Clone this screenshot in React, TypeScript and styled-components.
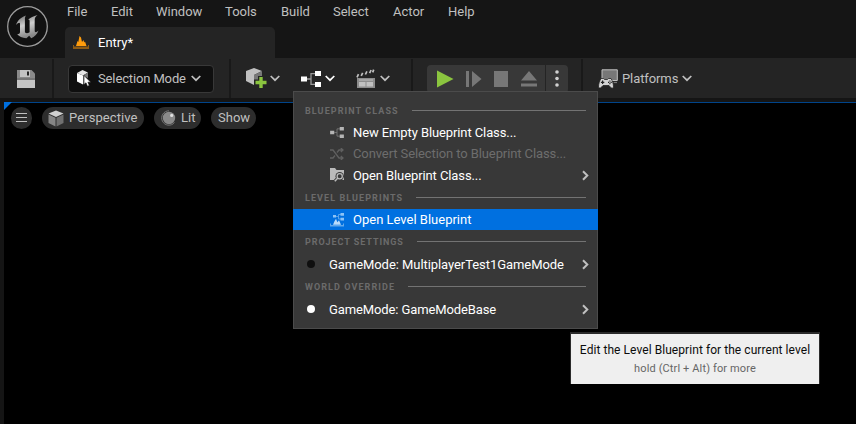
import React from "react";
import styled, { createGlobalStyle } from "styled-components";

const GlobalStyle = createGlobalStyle`
  * { box-sizing: border-box; }
  body { margin: 0; background: #000; font-family: Roboto, "Liberation Sans", sans-serif; overflow: hidden; }
  svg { display: block; flex: none; }
`;

const Window = styled.div`
  position: relative;
  width: 856px;
  height: 424px;
  display: flex;
  flex-direction: column;
  background: #151515;
  color: #c0c0c0;
  font-size: 13px;
  line-height: 16px;
  white-space: nowrap;
`;
const TitleArea = styled.header`
  display: flex;
  height: 58px;
`;
const LogoBox = styled.div`
  width: 65px;
  padding: 5px 0 0 6px;
`;
const TitleColumn = styled.div`
  display: flex;
  flex-direction: column;
`;
const MenuBar = styled.nav`
  display: flex;
  height: 27px;
  padding: 4px 0 0 2px;
`;
const MenuBarItem = styled.span<{ $w: number }>`
  width: ${(p) => p.$w}px;
`;
const Tab = styled.div`
  display: flex;
  align-items: center;
  gap: 9px;
  width: 210px;
  height: 31px;
  padding-left: 8px;
  border-radius: 5px 5px 0 0;
  background: #242424;
  color: #fff;
`;
const Toolbar = styled.div`
  display: flex;
  height: 40px;
  background: #242424;
`;
const Group = styled.div<{ $w?: number; $pad?: number; $last?: boolean }>`
  display: flex;
  align-items: center;
  width: ${(p) => (p.$w ? p.$w + "px" : "auto")};
  height: 39px;
  margin-top: 1px;
  padding-left: ${(p) => p.$pad ?? 0}px;
  border-right: ${(p) => (p.$last ? "none" : "2px solid #191919")};
`;
const ModeButton = styled.div`
  display: flex;
  align-items: center;
  gap: 6px;
  width: 146px;
  height: 28px;
  padding: 0 12px 0 7px;
  border: 1px solid #383838;
  border-radius: 4px;
  background: #0f0f0f;
`;
const Label = styled.span<{ $w?: number; $ls?: number; $drop?: number }>`
  width: ${(p) => (p.$w ? p.$w + "px" : "auto")};
  padding-top: ${(p) => p.$drop ?? 0}px;
  letter-spacing: ${(p) => p.$ls ?? 0}px;
`;
const IconButton = styled.div<{ $w: number; $gap: number }>`
  display: flex;
  align-items: center;
  gap: ${(p) => p.$gap}px;
  width: ${(p) => p.$w}px;
`;
const PlayBar = styled.div`
  display: flex;
  height: 28px;
  border-radius: 4px;
  background: #383838;
  overflow: hidden;
`;
const PlayCell = styled.div<{ $w: number; $pad: number; $line?: boolean }>`
  display: flex;
  align-items: center;
  width: ${(p) => p.$w}px;
  padding-left: ${(p) => p.$pad}px;
  border-left: ${(p) => (p.$line ? "1px solid #242424" : "none")};
`;
const Viewport = styled.main`
  position: relative;
  flex: 1;
  margin: 4px 0 0 4px;
  background: #000;
  border-top: 1px solid #00448a;
`;
const Corner = styled.svg`
  position: absolute;
  left: 0;
  top: -1px;
`;
const ViewBar = styled.div`
  display: flex;
  padding: 4px 0 0 7px;
`;
const Pill = styled.div<{ $w: number; $pad: number; $gap?: number }>`
  display: flex;
  align-items: center;
  gap: ${(p) => p.$gap ?? 0}px;
  width: ${(p) => p.$w}px;
  height: 22px;
  margin-right: 10px;
  padding-left: ${(p) => p.$pad}px;
  border-radius: 11px;
  background: #2d2d2d;
`;
const Popup = styled.div`
  position: absolute;
  left: 293px;
  top: 91px;
  width: 305px;
  height: 238px;
  padding-top: 8px;
  border: 1px solid #4b4b4b;
  background: #383838;
  color: #fff;
`;
const Section = styled.div<{ $h: number; $ls?: number; $drop?: number }>`
  display: flex;
  align-items: center;
  gap: 13px;
  height: ${(p) => p.$h}px;
  padding: ${(p) => p.$drop ?? 0}px 11px 0;
  color: #6b6b6b;
  font-size: 9px;
  font-weight: 700;
  letter-spacing: ${(p) => p.$ls ?? 1.08}px;
  &::after {
    content: "";
    flex: 1;
    height: 1px;
    background: #737373;
  }
`;
const Item = styled.div<{ $h: number; $active?: boolean; $off?: boolean; $mode?: boolean }>`
  display: flex;
  align-items: center;
  height: ${(p) => p.$h}px;
  margin: 0 -1px;
  padding: 0 9px 0 ${(p) => (p.$mode ? 14 : 37)}px;
  background: ${(p) => (p.$active ? "#0070e0" : "transparent")};
  color: ${(p) => (p.$off ? "#6d6d6d" : "#fff")};
`;
const ItemIcon = styled.span`
  width: 23px;
`;
const Dot = styled.span<{ $on?: boolean }>`
  width: 8px;
  height: 8px;
  margin-right: 14px;
  border-radius: 50%;
  background: ${(p) => (p.$on ? "#fff" : "#0f0f0f")};
`;
const Fill = styled.span`
  flex: 1;
`;
const Tooltip = styled.div`
  position: absolute;
  left: 571px;
  top: 334px;
  width: 248px;
  height: 50px;
  padding-top: 8px;
  background: #efefef;
  box-shadow: 0 -1px 0 1px #2a2a2a;
  color: #0c0c0c;
  text-align: center;
  font-size: 12px;
  letter-spacing: 0.06px;
`;
const Hint = styled.div`
  margin-top: 3px;
  color: #666;
  font-size: 11px;
  line-height: 15px;
  letter-spacing: 0.13px;
`;

const Chevron = ({ color = "#c0c0c0" }: { color?: string }) => (
  <svg width="10" height="7" viewBox="0 0 10 7" fill="none" stroke={color} strokeWidth="1.7">
    <path d="M.7 1 5 5.2 9.3 1" />
  </svg>
);
const SubArrow = () => (
  <svg width="7" height="11" viewBox="0 0 7 11" fill="none" stroke="#c0c0c0" strokeWidth="2">
    <path d="M1 1.2 5.3 5.5 1 9.8" />
  </svg>
);
const Logo = () => (
  <svg width="43" height="43" viewBox="0 0 43 43">
    <defs>
      <linearGradient id="steel" x1="0" y1="0" x2=".3" y2="1">
        <stop offset="0" stopColor="#666" />
        <stop offset=".5" stopColor="#cfcfcf" />
        <stop offset="1" stopColor="#888" />
      </linearGradient>
    </defs>
    <circle cx="21.500" cy="21.500" r="19.800" fill="#111" stroke="#9c9c9c" strokeWidth="1.300" />
    <path
      fill="url(#steel)"
      d="M10 20C11.500 15.500 14.500 12.500 20 10.500 19 12 18.900 12.800 18.900 14.500V26.500C18.900 28.200 21 29 23.600 27.200V16C23.600 14.900 23 14.500 22.100 14.800 24.300 12.300 27.500 11.200 31.500 10 29.500 11.800 28.700 12.800 28.700 15V25.500C28.700 27.500 30 28 32.500 25.500 31 29.500 28.500 31.500 25.200 33.300L23.200 30.800 20.400 33.300C16 33.200 13.200 31.200 11.200 29.300 12.900 29.200 14 28.600 14 27V18.800C14 17.200 12.200 17.500 10 20Z"
    />
  </svg>
);
const LevelIcon = () => (
  <svg width="16" height="14" viewBox="0 0 16 14">
    <path fill="#ff9c0c" d="M3 10 4.500 5 5.300 6 6.500 0 8 1.500 9 6 10.500 4 11.200 6.500 12 5.500 13.500 10Z" />
    <path fill="#8d5b14" d="M0 9h1v1.500h14V9h1v4H0Z" />
  </svg>
);
const SaveIcon = () => (
  <svg width="18" height="18" viewBox="0 0 18 18">
    <path fill="#8a8a8a" d="M0 0H14.500L18 3.500V18H0Z" />
    <path fill="#c4c4c4" d="M3 0H13V7H3ZM0 10H18V18H0Z" />
    <path fill="#242424" d="M10 1.500h2V5.500h-2Z" />
    <path fill="#777" d="M0 8h18v2H0Z" />
  </svg>
);
const SelectIcon = () => (
  <svg width="16" height="17" viewBox="0 0 16 17">
    <path fill="#fff" d="M1 3 7 5.500V14.500L1 11.500Z" />
    <path fill="#e6e6e6" d="M1 3 6.500 0 12 2.500 7 5.500Z" />
    <path fill="#777" d="M7 5.500 12 2.500V8L8 6.500V14L7 14.500Z" />
    <path fill="#fff" stroke="#0f0f0f" strokeWidth=".6" d="M8 5.500V14.500L10 12.800 11.400 16.200 13.300 15.400 11.900 12.200H14.800Z" />
  </svg>
);
const AddIcon = () => (
  <svg width="21" height="21" viewBox="0 0 21 21">
    <path fill="#c0c0c0" d="M0 3 8 0 16 3 8 7V17L0 13Z" />
    <path fill="#777" d="M8 7 16 3V13L8 17Z" />
    <path stroke="#242424" strokeWidth="6" d="M15 8V21M8 14.500H21" />
    <path stroke="#8bc53f" strokeWidth="3.400" d="M15 9V20M9.500 14.500H20.500" />
  </svg>
);
const GraphIcon = ({ w = 20, h = 16, node = "#fff", wire = "#999" }) => (
  <svg width={w} height={h} viewBox="0 0 20 16">
    <path fill="none" stroke={wire} strokeWidth="1.300" d="M6 8H10M15 2.700H10V13.300H15" />
    <path fill={node} d="M0 5.500h6v5H0ZM14 0h6v5h-6ZM14 11h6v5h-6Z" />
  </svg>
);
const ClapIcon = () => (
  <svg width="19" height="20" viewBox="0 0 19 20">
    <path stroke="#c0c0c0" strokeWidth="1.700" d="M1 8.300 2.500 5.200M5.200 6.900 6.700 3.800M9.400 5.500 10.900 2.400M13.600 4.100 15.100 1M16.700 3.400 17.700 .6" />
    <path fill="#8c8c8c" d="M1 9H19V19H1Z" />
    <path fill="#c0c0c0" d="M3 13H9.500V17.500H3ZM10.500 13H17V17.500H10.500ZM3 10.500H17V11.500H3Z" />
  </svg>
);
const PlatformIcon = () => (
  <svg width="20" height="20" viewBox="0 0 20 20">
    <path fill="#777" stroke="#c0c0c0" d="M4 .8H19.300V11.500H4Z" />
    <path stroke="#777" strokeWidth="1.200" d="M15.500 13.500H19" />
    <path fill="#d4d4d4" stroke="#242424" strokeWidth=".8" d="M3 9.500H5.500L6.500 10.500H9.500L10.500 9.500H13C14.500 12 15.500 15 15.500 18 14.500 20 13.500 19.500 11 16.500H5C3 19 1.500 20 .5 18 .5 15 1.500 12 3 9.500Z" />
    <path stroke="#242424" strokeWidth="1.200" d="M2.900 13.300H6.300M4.600 11.600V15M10 13.300h1.300M12.500 13.300H13.800M11.900 11.400V12.600M11.900 14V15.200" />
  </svg>
);
const CubeIcon = () => (
  <svg width="16" height="17" viewBox="0 0 16 17">
    <path fill="#d0d0d0" d="M.5 3.500 8 .5 15.500 3.500 8 7Z" />
    <path fill="#858585" d="M.5 4.500 7.500 7.700V16.500L.5 13Z" />
    <path fill="#707070" d="M8.500 7.700 15.500 4.500V13L8.500 16.500Z" />
  </svg>
);
const LitIcon = () => (
  <svg width="16" height="16" viewBox="0 0 16 16">
    <circle cx="8" cy="8" r="6.200" fill="#8a8a8a" />
    <path d="M8 .8A7.200 7.200 0 1 0 13.500 12.500" fill="none" stroke="#777" />
    <circle cx="10.700" cy="5.400" r="1.600" fill="#e0e0e0" />
  </svg>
);
const ShuffleIcon = () => (
  <svg width="14" height="12" viewBox="0 0 14 12" fill="none" stroke="#606060" strokeWidth="1.300">
    <path d="M0 2H3L9 10H13M0 10H3L5 7.500M7 4.500 9 2H13M10.800 0 13 2 10.800 4M10.800 8 13 10 10.800 12" />
  </svg>
);
const FolderIcon = () => (
  <svg width="15" height="14" viewBox="0 0 15 14">
    <path fill="#bababa" d="M0 0H5L6.500 2H14V12H0Z" />
    <circle cx="9.700" cy="8.200" r="4.200" fill="#383838" />
    <path stroke="#383838" strokeWidth="3.500" d="M9 9 4 14.500" />
    <circle cx="9.700" cy="8.200" r="2.600" fill="none" stroke="#bababa" strokeWidth="1.300" />
    <path stroke="#bababa" strokeWidth="1.500" d="M7.900 10 4.800 13.300" />
  </svg>
);
const LevelGraphIcon = () => (
  <svg width="14" height="14" viewBox="0 0 14 14">
    <path fill="none" stroke="#5aa3ea" d="M5 3.500H8.500M11 1.500H8.500V6H11" />
    <path fill="#8cc2f5" d="M3 2H6V4.500H3ZM10.500 0H14V2.800H10.500ZM10.500 4.800H14V7.500H10.500Z" />
    <path fill="#b9dcfb" d="M3 11.800 4.500 8.200 6 5.800 7.300 9.300 9 7.300 11 11.800Z" />
    <path fill="#61a8eb" d="M0 10.500h1v1.500h12V10.500h1v3H0Z" />
  </svg>
);

const menus: [string, number][] = [
  ["File", 44], ["Edit", 45], ["Window", 69], ["Tools", 56],
  ["Build", 52], ["Select", 60], ["Actor", 55], ["Help", 40],
];

export default function App() {
  return (
    <Window>
      <GlobalStyle />
      <TitleArea>
        <LogoBox><Logo /></LogoBox>
        <TitleColumn>
          <MenuBar>
            {menus.map(([name, w]) => <MenuBarItem key={name} $w={w}>{name}</MenuBarItem>)}
          </MenuBar>
          <Tab><LevelIcon /><Label>Entry*</Label></Tab>
        </TitleColumn>
      </TitleArea>
      <Toolbar>
        <Group $w={54} $pad={17}><SaveIcon /></Group>
        <Group $w={177} $pad={14}>
          <ModeButton>
            <SelectIcon />
            <Label $w={87} $ls={-0.13}>Selection Mode</Label>
            <Chevron />
          </ModeButton>
        </Group>
        <Group $w={182} $pad={15}>
          <IconButton $w={55} $gap={3}><AddIcon /><Chevron /></IconButton>
          <IconButton $w={55} $gap={4}><GraphIcon /><Chevron color="#fff" /></IconButton>
          <IconButton $w={40} $gap={5}><ClapIcon /><Chevron /></IconButton>
        </Group>
        <Group $w={170} $pad={14}>
          <PlayBar>
            <PlayCell $w={38} $pad={10}>
              <svg width="17" height="18"><path fill="#8bc53f" d="M0 .5 16.500 9 0 17.500Z" /></svg>
            </PlayCell>
            <PlayCell $w={29} $pad={1}>
              <svg width="16" height="16"><path fill="#777" d="M0 0h3v16H0ZM6 0 15.500 8 6 16Z" /></svg>
            </PlayCell>
            <PlayCell $w={27} $pad={0}>
              <svg width="14" height="16"><path fill="#777" d="M0 0h14v16H0Z" /></svg>
            </PlayCell>
            <PlayCell $w={24} $pad={0}>
              <svg width="16" height="16"><path fill="#777" d="M8 0 16 9.500H0ZM0 12.500h16v3H0Z" /></svg>
            </PlayCell>
            <PlayCell $w={23} $pad={9} $line>
              <svg width="4" height="17" fill="#d0d0d0">
                <circle cx="2" cy="2" r="1.800" /><circle cx="2" cy="8.500" r="1.800" /><circle cx="2" cy="15" r="1.800" />
              </svg>
            </PlayCell>
          </PlayBar>
        </Group>
        <Group $pad={15} $last>
          <IconButton $w={24} $gap={0}><PlatformIcon /></IconButton>
          <Label $w={60} $ls={-0.1}>Platforms</Label>
          <Chevron />
        </Group>
      </Toolbar>
      <Viewport>
        <Corner width="8" height="8"><path fill="#0070e0" d="M0 0H8L0 8Z" /></Corner>
        <ViewBar>
          <Pill $w={21} $pad={5}>
            <svg width="11" height="10" stroke="#c0c0c0"><path d="M0 .5H11M0 4.500H11M0 8.500H11" /></svg>
          </Pill>
          <Pill $w={102} $pad={6} $gap={5}><CubeIcon /><Label $ls={0.08}>Perspective</Label></Pill>
          <Pill $w={47} $pad={7} $gap={4}><LitIcon /><Label>Lit</Label></Pill>
          <Pill $w={45} $pad={7}><Label>Show</Label></Pill>
        </ViewBar>
      </Viewport>
      <Popup>
        <Section $h={21}>BLUEPRINT CLASS</Section>
        <Item $h={22}><ItemIcon><GraphIcon w={14} h={11} node="#b5b5b5" wire="#777" /></ItemIcon><Label $ls={-0.1} $drop={2}>New Empty Blueprint Class...</Label></Item>
        <Item $h={21} $off><ItemIcon><ShuffleIcon /></ItemIcon><Label $ls={-0.1}>Convert Selection to Blueprint Class...</Label></Item>
        <Item $h={22}><ItemIcon><FolderIcon /></ItemIcon><Label $ls={-0.1} $drop={2}>Open Blueprint Class...</Label><Fill /><SubArrow /></Item>
        <Section $h={23}>LEVEL BLUEPRINTS</Section>
        <Item $h={21} $active><ItemIcon><LevelGraphIcon /></ItemIcon><Label>Open Level Blueprint</Label></Item>
        <Section $h={22} $ls={0.94} $drop={1}>PROJECT SETTINGS</Section>
        <Item $h={24} $mode><Dot /><Label $ls={-0.06} $drop={2}>GameMode: MultiplayerTest1GameMode</Label><Fill /><SubArrow /></Item>
        <Section $h={21}>WORLD OVERRIDE</Section>
        <Item $h={24} $mode><Dot $on /><Label $ls={-0.11} $drop={2}>GameMode: GameModeBase</Label><Fill /><SubArrow /></Item>
      </Popup>
      <Tooltip>
        Edit the Level Blueprint for the current level
        <Hint>hold (Ctrl + Alt) for more</Hint>
      </Tooltip>
    </Window>
  );
}
